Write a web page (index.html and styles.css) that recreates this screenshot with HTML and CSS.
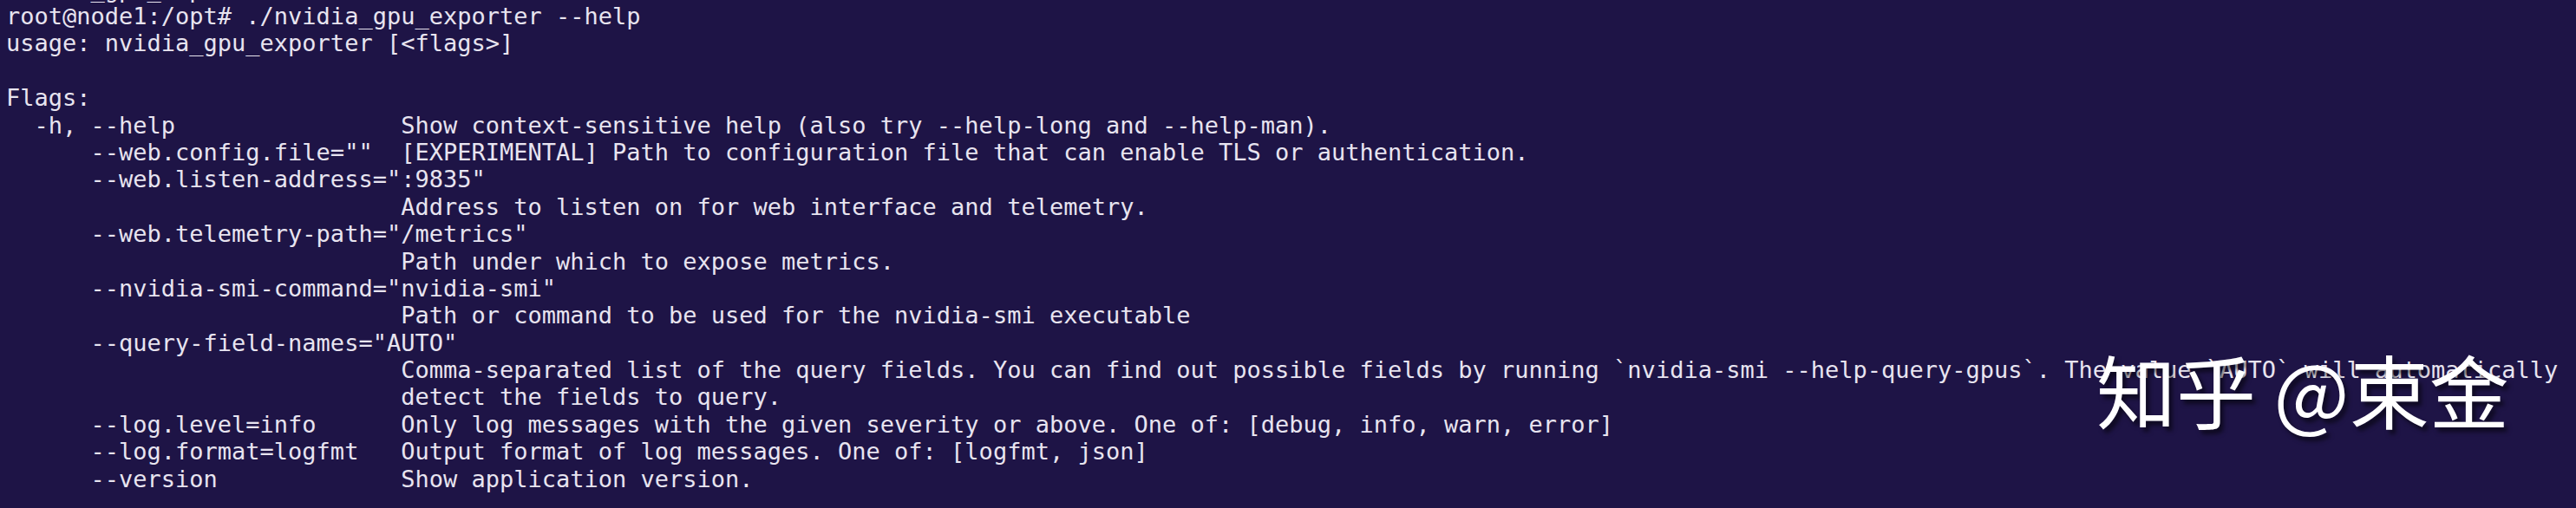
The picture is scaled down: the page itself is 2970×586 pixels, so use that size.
FILE: index.html
```html
<!DOCTYPE html>
<html lang="en">
<head>
<meta charset="utf-8">
<title>nvidia_gpu_exporter --help</title>
<link rel="stylesheet" href="styles.css">
</head>
<body>
<main class="terminal">
<div class="screen">
<div class="ln">nvidia_gpu_exporter</div>
<div class="ln">root@node1:/opt# ./nvidia_gpu_exporter --help</div>
<div class="ln">usage: nvidia_gpu_exporter [&lt;flags&gt;]</div>
<div class="ln"> </div>
<div class="ln">Flags:</div>
<div class="ln">  -h, --help                Show context-sensitive help (also try --help-long and --help-man).</div>
<div class="ln">      --web.config.file=""  [EXPERIMENTAL] Path to configuration file that can enable TLS or authentication.</div>
<div class="ln">      --web.listen-address=":9835"</div>
<div class="ln">                            Address to listen on for web interface and telemetry.</div>
<div class="ln">      --web.telemetry-path="/metrics"</div>
<div class="ln">                            Path under which to expose metrics.</div>
<div class="ln">      --nvidia-smi-command="nvidia-smi"</div>
<div class="ln">                            Path or command to be used for the nvidia-smi executable</div>
<div class="ln">      --query-field-names="AUTO"</div>
<div class="ln">                            Comma-separated list of the query fields. You can find out possible fields by running `nvidia-smi --help-query-gpus`. The value `AUTO` will automatically</div>
<div class="ln">                            detect the fields to query.</div>
<div class="ln">      --log.level=info      Only log messages with the given severity or above. One of: [debug, info, warn, error]</div>
<div class="ln">      --log.format=logfmt   Output format of log messages. One of: [logfmt, json]</div>
<div class="ln">      --version             Show application version.</div>
</div>
<div class="watermark">知乎 @束金</div>
</main>
</body>
</html>
```
FILE: styles.css
```css
html, body {
  margin: 0;
  padding: 0;
  background: #1e1446;
}
.terminal {
  position: relative;
  width: 2970px;
  height: 586px;
  overflow: hidden;
  background: #1e1446;
}
.screen {
  margin-top: -28.4px;
  padding-left: 7px;
  font-family: "DejaVu Sans Mono", "Liberation Mono", monospace;
  font-size: 27px;
  line-height: 31.4px;
  color: #e8e4f0;
}
.ln {
  white-space: pre;
  height: 31.4px;
}
.watermark {
  position: absolute;
  left: 2417px;
  top: 402px;
  font-family: "Noto Sans CJK SC", "Noto Sans", sans-serif;
  font-size: 92px;
  line-height: 1;
  color: #ffffff;
  white-space: pre;
  text-shadow: 4px 5px 5px rgba(0, 0, 0, 0.55);
}
```
